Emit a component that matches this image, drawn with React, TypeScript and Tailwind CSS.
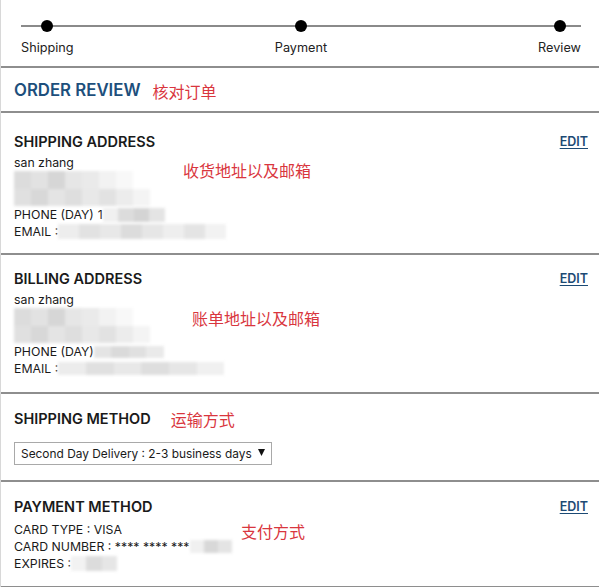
import React from "react";

const FONT = { fontFamily: "Inter, 'Noto Sans', sans-serif" };
const CJK = { fontFamily: "'Noto Sans CJK SC', sans-serif" };

function Blur({ w, h, cells }: { w: number; h: number; cells: string[] }) {
  return (
    <span
      className="inline-flex align-middle overflow-hidden blur-[1.5px]"
      style={{ width: w, height: h }}
    >
      {cells.map((c, i) => (
        <span key={i} className="flex-1 h-full" style={{ background: c }} />
      ))}
    </span>
  );
}

function AddressBlur() {
  return (
    <div className="flex flex-col w-[136px] h-[35px] blur-[1.5px] overflow-hidden">
      <div className="flex flex-1">
        <span className="flex-1 bg-[#dcdcdc]" />
        <span className="flex-1 bg-[#e2e2e2]" />
        <span className="flex-1 bg-[#d6d6d6]" />
        <span className="flex-1 bg-[#e6e6e6]" />
        <span className="flex-1 bg-[#eaeaea]" />
        <span className="flex-1 bg-[#f2f2f2]" />
        <span className="flex-1 bg-[#f8f8f8]" />
        <span className="flex-1 bg-white" />
      </div>
      <div className="flex flex-1">
        <span className="flex-1 bg-[#e0e0e0]" />
        <span className="flex-1 bg-[#d8d8d8]" />
        <span className="flex-1 bg-[#e4e4e4]" />
        <span className="flex-1 bg-[#dedede]" />
        <span className="flex-1 bg-[#e8e8e8]" />
        <span className="flex-1 bg-[#e2e2e2]" />
        <span className="flex-1 bg-[#ececec]" />
        <span className="flex-1 bg-[#f4f4f4]" />
      </div>
    </div>
  );
}

function Note({ children, className }: { children: React.ReactNode; className: string }) {
  return (
    <span className={"absolute text-[16px] leading-none text-[#d9363e] whitespace-nowrap " + className} style={CJK}>
      {children}
    </span>
  );
}

function Title({ children, edit }: { children: React.ReactNode; edit?: boolean }) {
  return (
    <div className="flex items-center justify-between h-[20px]">
      <span className="text-[14.5px] font-semibold">{children}</span>
      {edit && (
        <a className="mt-[2px] text-[12.5px] font-semibold text-[#1c4a74] underline underline-offset-2 leading-none">
          EDIT
        </a>
      )}
    </div>
  );
}

const Divider = () => <div className="h-[2px] bg-[#8e8e8e]" />;

export default function App() {
  return (
    <div className="w-[599px] h-[587px] bg-white border-l border-[#d8d8d8] overflow-hidden text-[#1a1a1a]" style={FONT}>
      {/* progress */}
      <div className="relative h-[66px] pl-[20px] pr-[18px] pt-[20px]">
        <div className="absolute left-[20px] right-[18px] top-[25px] h-[2px] bg-[#8a8a8a]" />
        <div className="relative grid grid-cols-[1fr_auto_1fr]">
          {["Shipping", "Payment", "Review"].map((l, i) => (
            <div
              key={l}
              className={
                "flex flex-col items-center " +
                (i === 0 ? "justify-self-start" : i === 1 ? "justify-self-center" : "justify-self-end")
              }
            >
              <span className="w-[12px] h-[12px] rounded-full bg-black" />
              <span className="mt-[10px] text-[12.7px] leading-none text-[#222]">{l}</span>
            </div>
          ))}
        </div>
      </div>
      <Divider />
      <div className="h-[43px] px-[13px] pt-[2px] flex items-center gap-[12px]">
        <span className="text-[16.8px] font-semibold text-[#1d4f7c]">ORDER REVIEW</span>
        <span className="text-[16px] text-[#d9363e]" style={CJK}>核对订单</span>
      </div>
      <Divider />

      {/* shipping address */}
      <div className="relative pl-[13px] pr-[11px] pt-[18px] pb-[13px] text-[12.3px] leading-[17px]">
        <Title edit>SHIPPING ADDRESS</Title>
        <div className="mt-[3px]">san zhang</div>
        <AddressBlur />
        <div className="flex items-center">
          PHONE (DAY) <span className="ml-[4px]">1</span>
          <Blur w={62} h={14} cells={["#f0f0f0", "#dcdcdc", "#d4d4d4", "#e4e4e4"]} />
        </div>
        <div className="flex items-center">
          EMAIL :
          <Blur w={168} h={15} cells={["#ededed", "#e2e2e2", "#e8e8e8", "#dcdcdc", "#e6e6e6", "#eeeeee", "#e4e4e4", "#f2f2f2"]} />
        </div>
        <Note className="left-[182px] top-[49px]">收货地址以及邮箱</Note>
      </div>
      <Divider />

      {/* billing */}
      <div className="relative pl-[13px] pr-[11px] pt-[13px] pb-[15px] text-[12.3px] leading-[17px]">
        <Title edit>BILLING ADDRESS</Title>
        <div className="mt-[3px]">san zhang</div>
        <AddressBlur />
        <div className="flex items-center">
          PHONE (DAY)
          <Blur w={70} h={12} cells={["#e4e4e4", "#dadada", "#e0e0e0", "#eaeaea"]} />
        </div>
        <div className="flex items-center">
          EMAIL :
          <Blur w={166} h={13} cells={["#ececec", "#e0e0e0", "#e8e8e8", "#dedede", "#e6e6e6", "#f0f0f0"]} />
        </div>
        <Note className="left-[191px] top-[55px]">账单地址以及邮箱</Note>
      </div>
      <Divider />

      {/* shipping method */}
      <div className="px-[13px] pt-[15px] pb-[15px]">
        <div className="flex items-center gap-[20px] h-[20px]">
          <span className="text-[14.5px] font-semibold">SHIPPING METHOD</span>
          <span className="text-[16px] leading-none text-[#d9363e]" style={CJK}>运输方式</span>
        </div>
        <div className="mt-[13px] w-[258px] h-[23px] border border-[#a9a9a9] flex items-center justify-between pl-[6px] pr-[6px] text-[11.9px]">
          <span>Second Day Delivery : 2-3 business days</span>
          <svg width="7" height="7" viewBox="0 0 7 7" className="mb-[2px]">
            <path d="M0 0 L7 0 L3.5 7 Z" fill="#111" />
          </svg>
        </div>
      </div>
      <Divider />

      {/* payment */}
      <div className="relative pl-[13px] pr-[11px] pt-[14px] pb-[14px] text-[12.3px] leading-[17px]">
        <Title edit>PAYMENT METHOD</Title>
        <div className="mt-[5px]">CARD TYPE : VISA</div>
        <div className="flex items-center">
          CARD NUMBER : **** **** ***
          <Blur w={42} h={13} cells={["#f0f0f0", "#d8d8d8", "#e4e4e4"]} />
        </div>
        <div className="flex items-center">
          EXPIRES :
          <Blur w={46} h={15} cells={["#f2f2f2", "#dcdcdc", "#e6e6e6"]} />
        </div>
        <Note className="left-[240px] top-[41px]">支付方式</Note>
      </div>
      <Divider />
    </div>
  );
}
